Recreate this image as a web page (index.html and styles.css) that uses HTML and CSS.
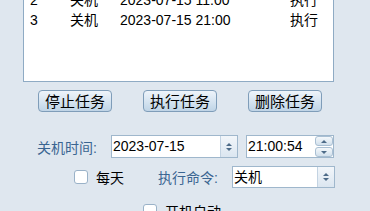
FILE: index.html
```html
<!DOCTYPE html>
<html>
<head>
<meta charset="utf-8">
<title>定时关机</title>
<link rel="stylesheet" href="styles.css">
</head>
<body>

<div class="app">

	<div class="tasklist">
		<div class="row"><span>1</span><span>关机</span><span>2023-07-15 08:00</span><span>执行</span></div>
		<div class="row"><span>2</span><span>关机</span><span>2023-07-15 11:00</span><span>执行</span></div>
		<div class="row"><span>3</span><span>关机</span><span>2023-07-15 21:00</span><span>执行</span></div>
	</div>

	<div class="buttons">
		<button class="btn">停止任务</button>
		<button class="btn">执行任务</button>
		<button class="btn">删除任务</button>
	</div>

	<div class="line first">
		<span class="label timelabel">关机时间:</span>
		<div class="field date">
			<span class="value">2023-07-15</span>
			<span class="updown"><i class="up"></i><i class="down"></i></span>
		</div>
		<div class="field time">
			<span class="value">21:00:54</span>
			<span class="spin">
				<span class="sbtn"><i class="up"></i></span>
				<span class="sbtn"><i class="down"></i></span>
			</span>
		</div>
	</div>

	<div class="line second">
		<span class="check"></span>
		<span class="plain">每天</span>
		<span class="label cmdlabel">执行命令:</span>
		<div class="field combo">
			<span class="value">关机</span>
			<span class="updown"><i class="up"></i><i class="down"></i></span>
		</div>
	</div>

	<div class="line third">
		<span class="check"></span>
		<span class="plain">开机自动</span>
	</div>

</div>

</body>
</html>
```

FILE: styles.css
```css
html {
	background: #dfe7ef;
}

body {
	margin: 0;
	font-family: "Liberation Sans", "Noto Sans CJK SC", sans-serif;
	font-size: 14px;
	color: #000;
}

.app {
	width: 370px;
	padding-top: 1px;
}

.tasklist {
	box-sizing: border-box;
	width: 311px;
	height: 115px;
	margin: -34px 0 0 23px;
	padding: 2px 0 0 0;
	background: #fff;
	border: 1px solid #8fabc4;
}

.row {
	display: grid;
	grid-template-columns: 40px 50px 170px 1fr;
	height: 20px;
	line-height: 20px;
	padding-left: 6px;
}

.buttons {
	display: flex;
	gap: 31px;
	margin: 8px 0 0 38px;
}

.btn {
	box-sizing: border-box;
	width: 74px;
	height: 22px;
	padding: 0;
	font: inherit;
	font-size: 15px;
	line-height: 19px;
	color: #000;
	background: linear-gradient(#eef4fa, #d7e5f1 50%, #bfd4e6);
	border: 1px solid #7f9db9;
	border-radius: 4px;
}

.line {
	display: flex;
	align-items: center;
}

.first {
	margin: 23px 0 0 37px;
}

.second {
	margin: 8px 0 0 74px;
}

.third {
	margin: 13px 0 0 143px;
}

.label {
	color: #3a6591;
}

.timelabel {
	width: 74px;
}

.cmdlabel {
	width: 74px;
	margin-left: 34px;
}

.plain {
	margin-left: 8px;
}

.check {
	box-sizing: border-box;
	width: 14px;
	height: 14px;
	background: #fff;
	border: 1px solid #9ab2c8;
	border-radius: 3px;
}

.field {
	box-sizing: border-box;
	display: flex;
	align-items: stretch;
	background: #fff;
	border: 1px solid #9fb7cc;
	height: 23px;
}

.value {
	flex: 1;
	padding-left: 1px;
	line-height: 21px;
}

.date {
	width: 127px;
}

.time {
	width: 88px;
	margin-left: 8px;
}

.combo {
	width: 103px;
	height: 22px;
}

.combo .value {
	line-height: 20px;
}

.updown {
	width: 16px;
	display: flex;
	flex-direction: column;
	align-items: center;
	justify-content: center;
	gap: 2px;
	border-left: 1px solid #c3d3e2;
	background: linear-gradient(#f2f6fa, #dbe6f0);
}

.spin {
	width: 18px;
	display: flex;
	flex-direction: column;
	justify-content: space-between;
	padding: 0 0 0 1px;
}

.sbtn {
	box-sizing: border-box;
	height: 10px;
	display: flex;
	align-items: center;
	justify-content: center;
	border: 1px solid #a9bfd3;
	border-radius: 3px;
	background: linear-gradient(#f4f8fb, #d2e0ec);
}

.up {
	width: 0;
	height: 0;
	border-left: 3px solid transparent;
	border-right: 3px solid transparent;
	border-bottom: 3px solid #4d6b88;
}

.down {
	width: 0;
	height: 0;
	border-left: 3px solid transparent;
	border-right: 3px solid transparent;
	border-top: 3px solid #4d6b88;
}
```
